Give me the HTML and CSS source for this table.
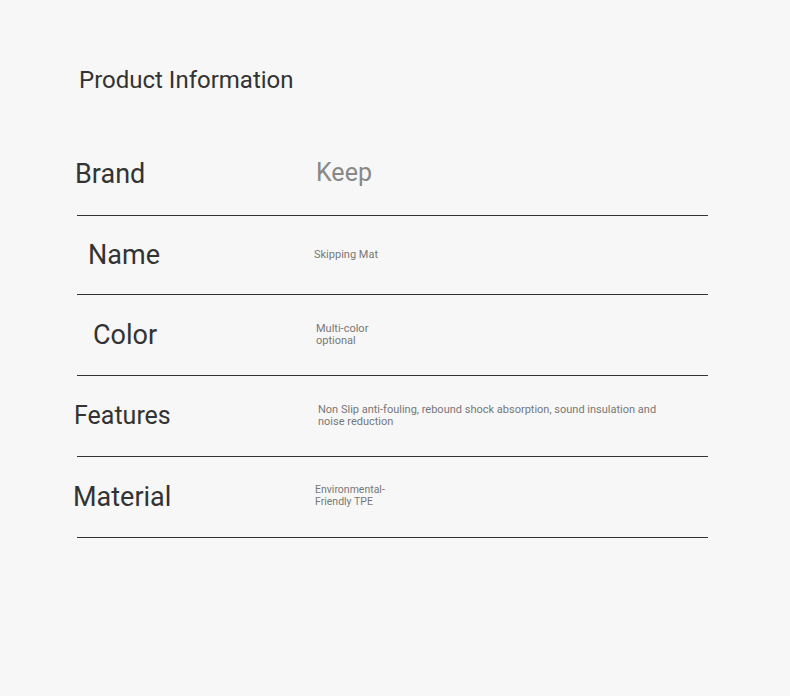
FILE: index.html
```html
<!DOCTYPE html>
<html lang="en">
<head>
    <meta charset="UTF-8">
    <title>Product Information</title>
    <link rel="stylesheet" href="styles.css">
</head>
<body>
    <div class="page">
        <h1 class="title">Product Information</h1>
        <div class="specs">
            <div class="row row-brand">
                <div class="label">Brand</div>
                <div class="value value-big">Keep</div>
            </div>
            <div class="row row-name">
                <div class="label">Name</div>
                <div class="value">Skipping Mat</div>
            </div>
            <div class="row row-color">
                <div class="label">Color</div>
                <div class="value">Multi-color<br>optional</div>
            </div>
            <div class="row row-features">
                <div class="label">Features</div>
                <div class="value">Non Slip anti-fouling, rebound shock absorption, sound insulation and<br>noise reduction</div>
            </div>
            <div class="row row-material">
                <div class="label">Material</div>
                <div class="value value-small">Environmental-<br>Friendly TPE</div>
            </div>
        </div>
    </div>
</body>
</html>
```

FILE: styles.css
```css
body {
    margin: 0;
    background: #f7f7f7;
    font-family: Roboto, "Noto Sans", sans-serif;
    color: #333;
}
.page {
    padding: 66px 0 0 77px;
}
.title {
    margin: 0 0 0 2px;
    font-size: 24px;
    font-weight: 400;
    line-height: 28px;
    color: #333;
}
.specs {
    width: 631px;
    margin-top: 41px;
}
.row {
    display: grid;
    grid-template-columns: 239px 1fr;
    align-items: center;
    height: 80px;
    border-bottom: 1px solid #333;
}
.label {
    font-size: 27px;
    line-height: 32px;
    color: #333;
}
.value {
    font-size: 11px;
    line-height: 12px;
    color: #777;
}
.value-big {
    font-size: 25px;
    line-height: 30px;
    color: #888;
    margin-top: -5px;
}
.value-small {
    font-size: 10.5px;
}
.row-brand .label {
    margin-left: -2px;
    margin-top: -2px;
}
.row-name {
    height: 78px;
}
.row-name .label {
    margin-left: 11px;
}
.row-name .value {
    margin-left: -2px;
}
.row-color .label {
    margin-left: 16px;
}
.row-features .label {
    margin-left: -3px;
    font-size: 25px;
}
.row-features .value {
    margin-left: 2px;
}
.row-material .label {
    margin-left: -4px;
}
.row-material .value {
    margin-left: -1px;
    margin-top: -2px;
}
```
